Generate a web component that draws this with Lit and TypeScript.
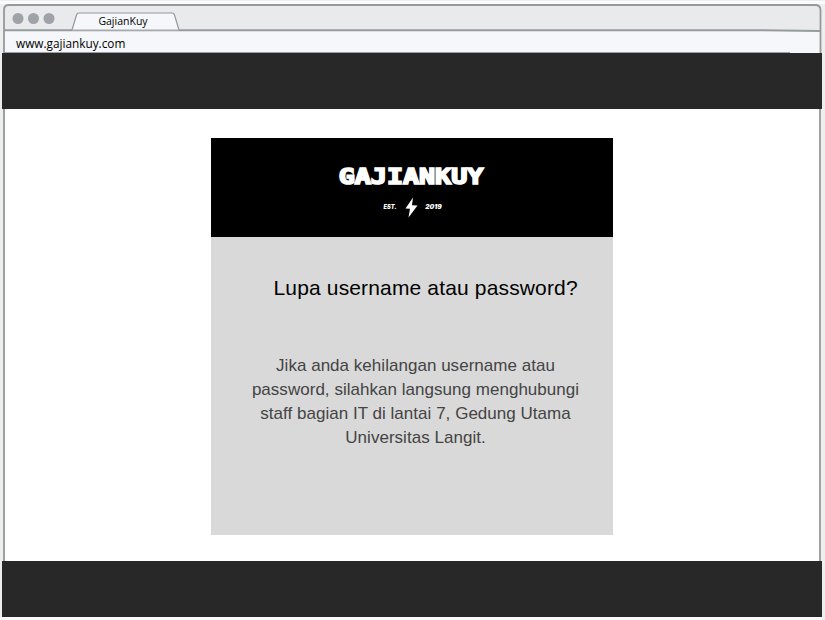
import { LitElement, html, css } from "lit";
import { customElement } from "lit/decorators.js";

@customElement("browser-chrome")
class BrowserChrome extends LitElement {
  static styles = css`
    :host { display: block; height: 53px; position: relative; font-family: "Open Sans", sans-serif; color: #000; }
    svg { display: block; width: 825px; height: 53px; }
    .tab, .url { position: absolute; white-space: nowrap; line-height: 16px; }
    .tab { left: 73px; width: 100px; top: 13px; text-align: center; font-size: 10.5px; }
    .url { left: 16px; top: 35px; font-size: 11.8px; }
  `;
  render() {
    return html`
      <svg viewBox="0 0 825 53">
        <rect width="825" height="53" fill="#eeeeee" />
        <rect y="1" width="825" height="3" fill="#fbfbfb" />
        <path d="M4 53V10Q4 5 9 5H815Q820.5 5 820.5 10V53" fill="#e9eaec" />
        <rect x="4" y="31" width="816" height="22" fill="#f5f7fa" />
        <path d="M4 53V10Q4 5 9 5H815Q820.5 5 820.5 10V53" fill="none" stroke="#949a9c" stroke-width="1.8" />
        <path d="M4 30.3H760L820 31" fill="none" stroke="#949c9e" stroke-width="2" />
        <path d="M72 30.5L76.5 15Q77 13 79 13H172Q174 13 174.5 15L179 30.5Z" fill="#f5f7fa" />
        <path d="M72 30L76.5 15Q77 13 79 13H172Q174 13 174.5 15L179 30" fill="none" stroke="#949a9c" stroke-width="1.2" />
        <path d="M72 30.3H179" stroke="#a5abad" stroke-width="1.4" />
        <path d="M4 52.5H790" stroke="#98a1a3" />
        <g fill="#9fa2a8">
          <circle cx="18" cy="18.5" r="5.5" /><circle cx="33.5" cy="18.5" r="5.5" /><circle cx="49" cy="18.5" r="5.5" />
        </g>
      </svg>
      <div class="tab">GajianKuy</div>
      <div class="url">www.gajiankuy.com</div>
    `;
  }
}

@customElement("brand-logo")
class BrandLogo extends LitElement {
  static styles = css`
    :host { display: block; height: 99px; background: #000; }
    svg { display: block; }
    .name { font: 700 21px "DejaVu Sans Mono", monospace; stroke: #fff; stroke-width: 1.7px; stroke-linejoin: miter; }
    .small { font: italic 900 6.6px Inter, sans-serif; }
  `;
  render() {
    return html`
      <svg width="402" height="99" viewBox="0 0 402 99" fill="#fff">
        <text class="name" x="127.7" y="46.3" textLength="144.6" lengthAdjust="spacingAndGlyphs">GAJIANKUY</text>
        <text class="small" x="172.5" y="71" textLength="13" lengthAdjust="spacingAndGlyphs">EST.</text>
        <path d="M202 59.5L194.5 70.5L199 70.8L197.5 79.5L206.5 67.5L201 67.2Z" />
        <text class="small" x="214.3" y="71" textLength="16.5" lengthAdjust="spacingAndGlyphs">2019</text>
      </svg>
    `;
  }
}

@customElement("app-root")
class AppRoot extends LitElement {
  static styles = css`
    :host { display: block; height: 620px; overflow: hidden; background: #eee; font-family: "Liberation Sans", Arial, sans-serif; }
    .bar { height: 56px; margin: 0 3px 0 2px; background: #282828; }
    .page { box-sizing: border-box; height: 452px; margin: 0 4px 0 3px; padding-top: 29px; background: #fff; border-left: 2px solid #9ba0a3; border-right: 2px solid #a0a4a7; }
    .card { width: 402px; height: 397px; margin-left: 206px; background: #d9d9d9; }
    h1 { margin: 37px 0 0 62.5px; font-size: 21px; line-height: 28px; font-weight: 400; letter-spacing: 0.15px; white-space: nowrap; color: #000; }
    p { margin: 52px 0 0 7px; text-align: center; font-size: 17px; line-height: 24px; letter-spacing: 0.03px; color: #444; white-space: nowrap; }
    .foot { height: 3px; margin-right: 3px; background: #fafafa; }
  `;
  render() {
    return html`
      <browser-chrome></browser-chrome>
      <div class="bar"></div>
      <div class="page">
        <div class="card">
          <brand-logo></brand-logo>
          <h1>Lupa username atau password?</h1>
          <p>Jika anda kehilangan username atau<br />password, silahkan langsung menghubungi<br />staff bagian IT di lantai 7, Gedung Utama<br />Universitas Langit.</p>
        </div>
      </div>
      <div class="bar"></div>
      <div class="foot"></div>
    `;
  }
}
